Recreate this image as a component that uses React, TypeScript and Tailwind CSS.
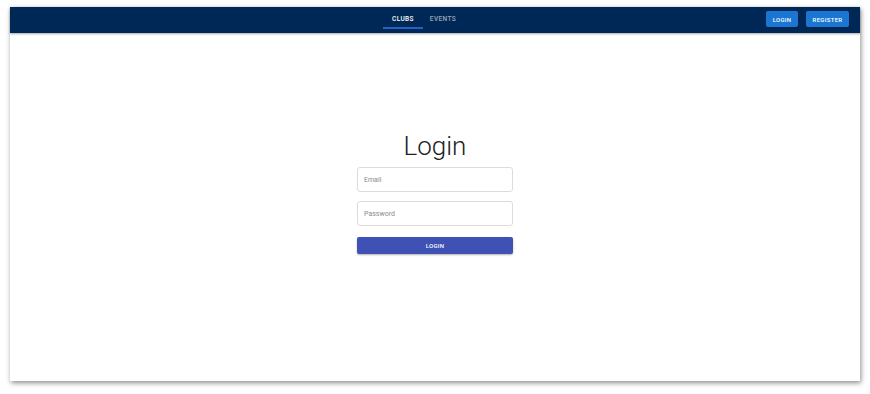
import React from 'react';

const NavTab: React.FC<{ label: string; active?: boolean }> = ({ label, active }) => (
  <div className="relative h-full w-[40px] flex items-center justify-center">
    <span
      className={`text-[6.5px] font-medium tracking-[0.4px] ${active ? 'text-white' : 'text-white/60'}`}
    >
      {label}
    </span>
    {active && <div className="absolute left-0 right-0 bottom-[4px] h-[2px] bg-[#1e63c8]" />}
  </div>
);

const HeaderButton: React.FC<{ label: string; width: string }> = ({ label, width }) => (
  <button
    className={`${width} h-[16px] rounded-[2px] bg-[#1976d2] text-white text-[6px] font-medium tracking-[0.3px] flex items-center justify-center shadow-sm`}
  >
    {label}
  </button>
);

export default function App() {
  return (
    <div
      className="w-[870px] h-[394px] bg-white pt-[7px] pl-[10px]"
      style={{ fontFamily: 'Roboto, "Liberation Sans", sans-serif' }}
    >
      <div className="w-[850px] h-[374px] bg-white flex flex-col shadow-[1px_2px_5px_rgba(0,0,0,0.45)]">
        <header className="relative h-[26px] bg-[#002856] flex items-center shadow-[0_1px_2px_rgba(0,0,0,0.35)]">
          <nav className="flex-1 h-full flex items-center justify-center pr-[24px]">
            <NavTab label="CLUBS" active />
            <NavTab label="EVENTS" />
          </nav>
          <div className="absolute right-[11px] top-[4px] flex items-center gap-[8px]">
            <HeaderButton label="LOGIN" width="w-[32px]" />
            <HeaderButton label="REGISTER" width="w-[43px]" />
          </div>
        </header>

        <main className="flex-1 flex flex-col items-center pt-[97px]">
          <h1 className="text-[26px] leading-[32px] font-light text-[#212121]">Login</h1>
          <form className="w-[156px] mt-[5px] flex flex-col">
            <input
              type="email"
              placeholder="Email"
              className="h-[25px] w-full rounded-[3px] border border-[#dcdcdc] px-[6px] text-[7px] text-[#333] placeholder:text-[#8a8a8a] outline-none"
            />
            <input
              type="password"
              placeholder="Password"
              className="h-[25px] w-full mt-[9px] rounded-[3px] border border-[#dcdcdc] px-[6px] text-[7px] text-[#333] placeholder:text-[#8a8a8a] outline-none"
            />
            <button
              type="button"
              className="h-[17px] w-full mt-[11px] rounded-[2px] bg-[#3f51b5] text-white text-[6px] font-medium tracking-[0.3px] shadow-[0_1px_2px_rgba(0,0,0,0.3)]"
            >
              LOGIN
            </button>
          </form>
        </main>
      </div>
    </div>
  );
}
